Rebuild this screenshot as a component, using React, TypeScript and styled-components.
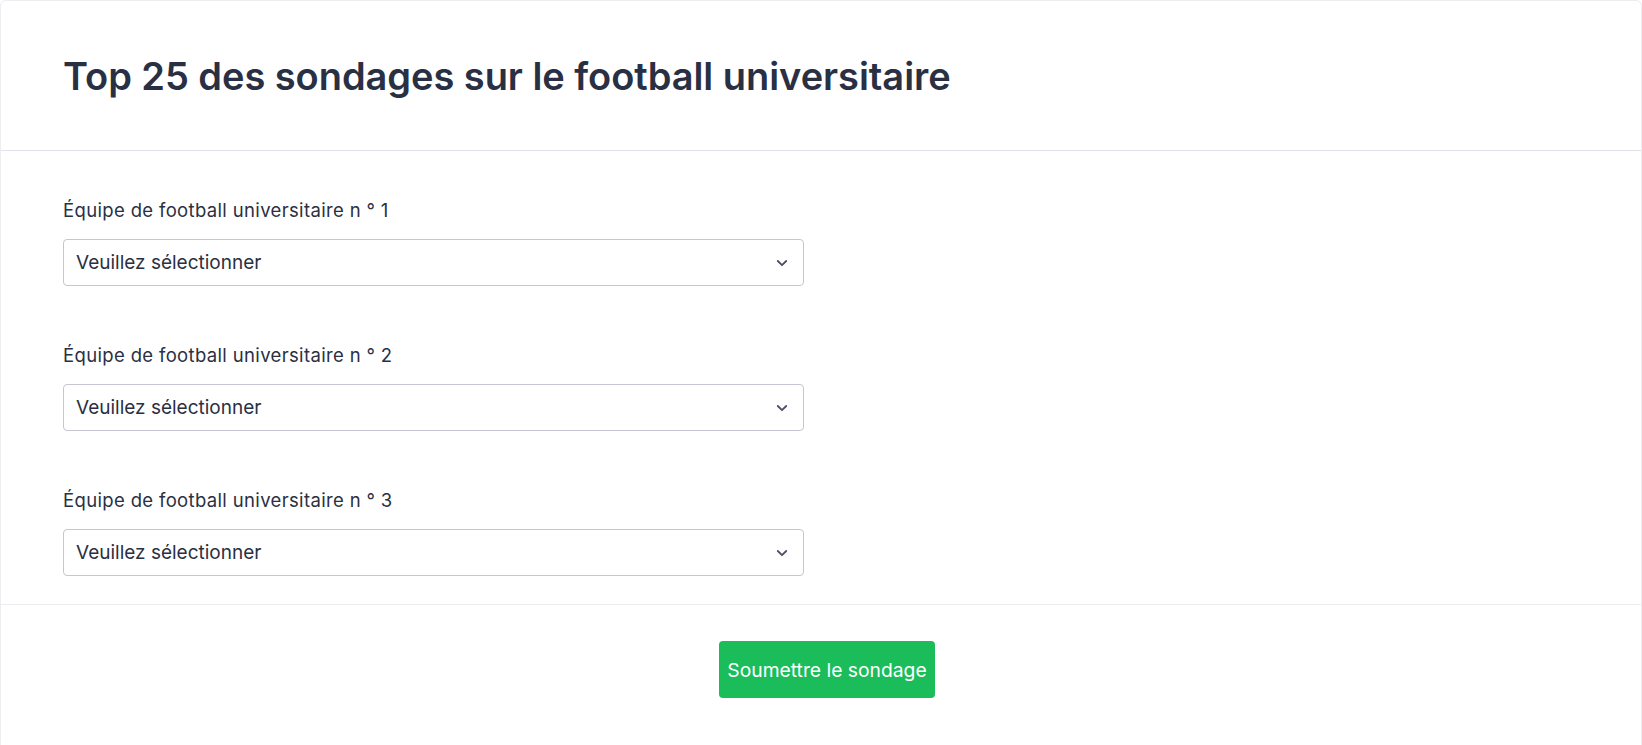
import React from 'react'
import styled, { createGlobalStyle } from 'styled-components'

const GlobalStyle = createGlobalStyle`
	html, body {
		margin: 0;
		padding: 0;
		background: #ffffff;
		font-family: Inter, "Noto Sans", "Liberation Sans", sans-serif;
	}
	* {
		box-sizing: border-box;
	}
`

const Card = styled.div`
	width: 100%;
	min-height: 760px;
	border: 1px solid #ececf1;
	border-radius: 6px;
	background: #ffffff;
	display: flex;
	flex-direction: column;
`

const Header = styled.div`
	height: 150px;
	display: flex;
	align-items: center;
	padding: 0 62px;
	border-bottom: 1px solid #e1e1ea;
`

const Title = styled.h1`
	margin: 0;
	font-size: 38px;
	font-weight: 600;
	color: #2a3043;
	letter-spacing: -0.05px;
`

const Body = styled.div`
	padding: 47px 62px 28px;
	display: flex;
	flex-direction: column;
	gap: 57px;
	border-bottom: 1px solid #ebebf0;
`

const Field = styled.div`
	display: flex;
	flex-direction: column;
	gap: 17px;
`

const Label = styled.label`
	font-size: 18.5px;
	line-height: 24px;
	font-weight: 400;
	letter-spacing: 0.35px;
	color: #2a3043;
`

const SelectBox = styled.div`
	position: relative;
	width: 741px;
	height: 47px;
	border: 1px solid #c4c6d3;
	border-radius: 4px;
	display: flex;
	align-items: center;
	justify-content: space-between;
	padding: 0 14px 0 12px;
	font-size: 19px;
	color: #2a3043;
	background: #ffffff;
`

const Chevron = styled.svg`
	width: 14px;
	height: 14px;
	color: #4b5063;
`

const Footer = styled.div`
	flex: 1;
	display: flex;
	justify-content: center;
	align-items: flex-start;
	padding: 36px 0 0 12px;
	background: #ffffff;
`

const SubmitButton = styled.button`
	width: 216px;
	height: 57px;
	border: none;
	border-radius: 4px;
	background: #1bbd5b;
	color: #ffffff;
	font-family: inherit;
	font-size: 19.3px;
	font-weight: 400;
	cursor: pointer;
`

const teams = [1, 2, 3]

const TeamSelect: React.FC<{ rank: number }> = ({ rank }) => {
	return (
		<Field>
			<Label>Équipe de football universitaire n ° {rank}</Label>
			<SelectBox>
				<span>Veuillez sélectionner</span>
				<Chevron viewBox="0 0 14 14" fill="none">
					<path d="M2.8 5 L7 9.2 L11.2 5" stroke="currentColor" strokeWidth="1.8" strokeLinecap="round" strokeLinejoin="round" />
				</Chevron>
			</SelectBox>
		</Field>
	)
}

const App = () => {
	return (
		<>
			<GlobalStyle />
			<Card>
				<Header>
					<Title>Top 25 des sondages sur le football universitaire</Title>
				</Header>
				<Body>
					{teams.map(n => (
						<TeamSelect key={n} rank={n} />
					))}
				</Body>
				<Footer>
					<SubmitButton>Soumettre le sondage</SubmitButton>
				</Footer>
			</Card>
		</>
	)
}

export default App
